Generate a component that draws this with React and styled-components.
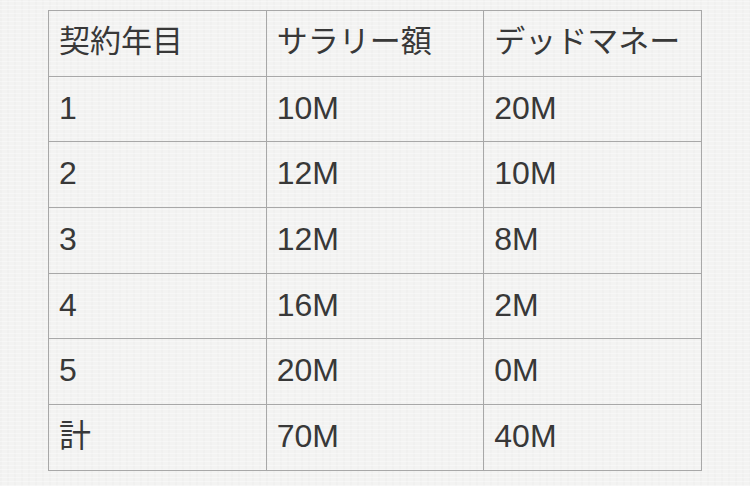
import React from 'react'
import styled, { createGlobalStyle } from 'styled-components'

const GlobalStyle = createGlobalStyle`
  html, body {
    margin: 0;
    padding: 0;
    background: #f3f3f2;
  }
  body {
    font-family: "Liberation Sans", "Noto Sans CJK JP", sans-serif;
    color: #363636;
  }
`

const Page = styled.div`
  width: 750px;
  height: 486px;
  padding: 10px 0 0 48px;
  box-sizing: border-box;
  background-color: #f3f3f2;
  background-image:
    repeating-linear-gradient(0deg, rgba(255, 255, 255, 0.35) 0 1px, transparent 1px 4px),
    repeating-linear-gradient(90deg, rgba(0, 0, 0, 0.012) 0 2px, transparent 2px 7px);
`

const Table = styled.table`
  width: 654px;
  border-collapse: collapse;
  table-layout: fixed;
  border: 1px solid #a3a3a3;
`

const Cell = styled.td`
  height: 65.7px;
  padding: 0 0 3px 10px;
  border: 1px solid #a8a8a8;
  font-size: 32px;
  line-height: 1;
  color: #383838;
  text-align: left;
  vertical-align: middle;
  box-sizing: border-box;
`

const HeadCell = styled(Cell).attrs({ as: 'th' })`
  font-weight: normal;
  font-size: 31px;
  padding-bottom: 4px;
`

const headers = ['契約年目', 'サラリー額', 'デッドマネー']

const rows = [
  ['1', '10M', '20M'],
  ['2', '12M', '10M'],
  ['3', '12M', '8M'],
  ['4', '16M', '2M'],
  ['5', '20M', '0M'],
  ['計', '70M', '40M']
]

export default function App () {
  return (
    <>
      <GlobalStyle />
      <Page>
        <Table>
          <thead>
            <tr>
              {headers.map(h => <HeadCell key={h}>{h}</HeadCell>)}
            </tr>
          </thead>
          <tbody>
            {rows.map(r => (
              <tr key={r[0]}>
                {r.map((v, i) => <Cell key={i}>{v}</Cell>)}
              </tr>
            ))}
          </tbody>
        </Table>
      </Page>
    </>
  )
}
